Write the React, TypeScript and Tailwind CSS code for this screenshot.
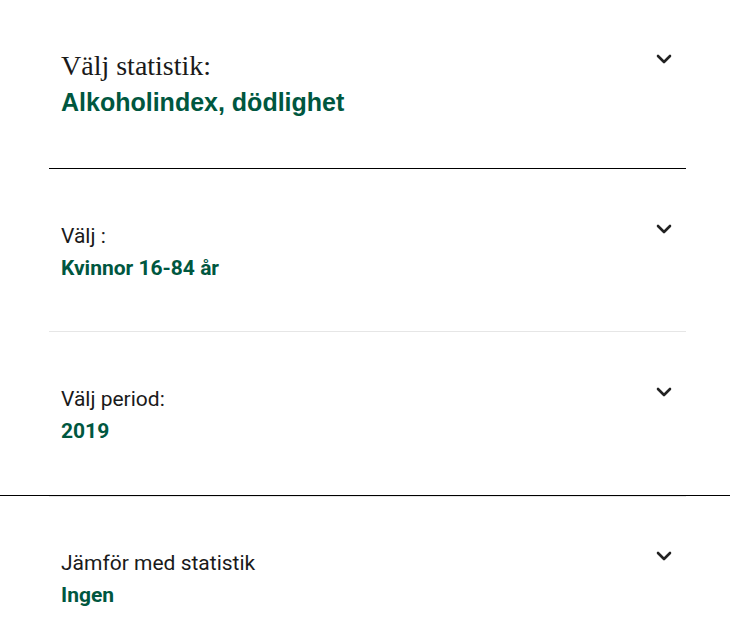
import React, { useState } from "react";

const GREEN = "text-[#00573f]";

function Chevron() {
  return (
    <svg
      width="24"
      height="24"
      viewBox="0 0 24 24"
      fill="none"
      stroke="#222"
      strokeWidth="2.6"
      strokeLinecap="round"
      strokeLinejoin="round"
      className="shrink-0 -mt-[3px]"
    >
      <path d="m6 9 6 6 6-6" />
    </svg>
  );
}

type Row = { label: string; value: string; h: string; border: string };

const rows: Row[] = [
  { label: "Välj :", value: "Kvinnor 16-84 år", h: "h-[163px]", border: "border-b border-[#e6e6e6]" },
  { label: "Välj period:", value: "2019", h: "h-[163px]", border: "" },
];

export default function App() {
  const [open, setOpen] = useState<number | null>(null);

  return (
    <div className="w-[730px] min-h-[635px] bg-white overflow-hidden font-['Roboto',sans-serif] text-[#1a1a1a]">
      <div className="ml-[49px] w-[637px]">
        {/* Huvudval */}
        <button
          type="button"
          onClick={() => setOpen(open === 0 ? null : 0)}
          className="w-full h-[169px] flex items-start justify-between pt-[50px] pl-3 pr-[10px] border-b border-black text-left"
        >
          <div className="flex flex-col">
            <span className="font-['Liberation_Serif',serif] text-[28px] leading-[32px]">Välj statistik:</span>
            <span className={`font-['Liberation_Sans',Arial,sans-serif] font-bold text-[25px] leading-[32px] mt-[4px] ${GREEN}`}>
              Alkoholindex, dödlighet
            </span>
          </div>
          <Chevron />
        </button>

        {rows.map((r, i) => (
          <button
            key={r.label}
            type="button"
            onClick={() => setOpen(open === i + 1 ? null : i + 1)}
            className={`w-full ${r.h} flex items-start justify-between pt-[51px] pl-3 pr-[10px] text-left ${r.border}`}
          >
            <div className="flex flex-col">
              <span className="text-[21px] leading-[32px]">{r.label}</span>
              <span className={`text-[21px] leading-[32px] font-bold ${GREEN}`}>{r.value}</span>
            </div>
            <Chevron />
          </button>
        ))}
      </div>

      <div className="h-px w-full bg-black" />

      <div className="ml-[49px] w-[637px]">
        <div className="h-px bg-[#e6e6e6]" />
        <button
          type="button"
          onClick={() => setOpen(open === 9 ? null : 9)}
          className="w-full flex items-start justify-between pt-[50px] pl-3 pr-[10px] text-left"
        >
          <div className="flex flex-col">
            <span className="text-[21px] leading-[32px]">Jämför med statistik</span>
            <span className={`text-[21px] leading-[32px] font-bold ${GREEN}`}>Ingen</span>
          </div>
          <Chevron />
        </button>
      </div>
    </div>
  );
}
